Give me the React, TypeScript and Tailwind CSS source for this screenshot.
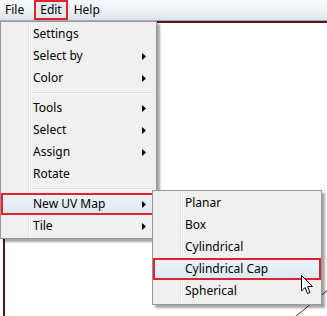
import React from "react";

type Item = { label: string; sub?: boolean; sep?: boolean; active?: boolean };

const editItems: Item[] = [
  { label: "Settings" },
  { label: "Select by", sub: true },
  { label: "Color", sub: true },
  { label: "", sep: true },
  { label: "Tools", sub: true },
  { label: "Select", sub: true },
  { label: "Assign", sub: true },
  { label: "Rotate" },
  { label: "", sep: true },
  { label: "New UV Map", sub: true, active: true },
  { label: "Tile", sub: true },
];

const uvItems: Item[] = [
  { label: "Planar" },
  { label: "Box" },
  { label: "Cylindrical" },
  { label: "Cylindrical Cap", active: true },
  { label: "Spherical" },
];

function Arrow() {
  return (
    <svg width="4" height="7" viewBox="0 0 4 7" className="block">
      <path d="M0 0 L4 3.5 L0 7 Z" fill="#000" />
    </svg>
  );
}

function MenuRow({ item }: { item: Item }) {
  if (item.sep) {
    return (
      <div className="h-[8px] flex items-center pl-[30px] pr-[2px]">
        <div className="w-full h-[2px] border-t border-[#e0e0e0] border-b-white border-b" />
      </div>
    );
  }
  return (
    <div
      className={
        "relative h-[22px] flex items-center pl-[32px] pr-[10px] " +
        (item.active ? "bg-gradient-to-b from-[#eef4fb] to-[#dde8f5]" : "")
      }
    >
      {item.active && (
        <div className="absolute inset-0 border-2 border-[#e3202c] pointer-events-none" />
      )}
      <span className="flex-1">{item.label}</span>
      {item.sub && <Arrow />}
    </div>
  );
}

function Menu({ items, className }: { items: Item[]; className: string }) {
  return (
    <div
      className={
        "absolute bg-[#f0f0f0] border border-[#979797] py-[1px] shadow-[3px_3px_2px_rgba(0,0,0,0.35)] " +
        className
      }
    >
      <div className="absolute left-[27px] top-[1px] bottom-[1px] w-[2px] border-l border-[#e2e3e3] border-r border-r-white" />
      <div className="relative">
        {items.map((it, i) => (
          <MenuRow key={i} item={it} />
        ))}
      </div>
    </div>
  );
}

export default function App() {
  return (
    <div
      className="relative w-[327px] h-[316px] bg-white overflow-hidden flex flex-col text-[12px] text-black"
      style={{ fontFamily: '"Noto Sans", "Open Sans", sans-serif' }}
    >
      <div className="h-[21px] shrink-0 flex items-center bg-gradient-to-b from-[#f7f9fc] via-[#eef2f8] to-[#dbe3ee] border-b border-[#a9acb1]">
        <span className="ml-[5px]">File</span>
        <span className="ml-[10px] px-[4px] h-[20px] flex items-center border-2 border-[#e3202c] bg-[#e4e9f0]">
          Edit
        </span>
        <span className="ml-[6px]">Help</span>
      </div>

      <div className="relative flex-1 ml-[3px] border-t-2 border-l-2 border-[#5e1414]">
        <svg className="absolute inset-0" width="324" height="294">
          <line x1="324" y1="266" x2="290" y2="294" stroke="#6b1a1a" strokeWidth="1" />
        </svg>
      </div>

      <Menu items={editItems} className="left-0 top-[21px] w-[157px]" />
      <Menu items={uvItems} className="left-[152px] top-[190px] w-[170px] pb-[2px]" />

      <svg
        className="absolute left-[301px] top-[275px]"
        width="13"
        height="20"
        viewBox="0 0 13 20"
      >
        <path
          d="M0.5 0.5 L0.5 16 L4 12.5 L6.5 18.5 L9 17.5 L6.5 11.5 L11.5 11.5 Z"
          fill="#fff"
          stroke="#000"
          strokeWidth="1"
        />
      </svg>
    </div>
  );
}
